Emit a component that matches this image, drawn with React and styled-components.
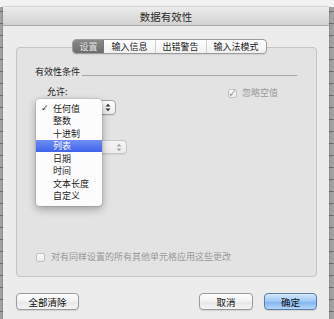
import React from 'react'
import styled, { createGlobalStyle } from 'styled-components'

const GlobalStyle = createGlobalStyle`
    html, body {
        margin: 0;
        padding: 0;
        background: #a4a4a4;
    }
    * {
        box-sizing: border-box;
    }
`

const menuItems = ['任何值', '整数', '十进制', '列表', '日期', '时间', '文本长度', '自定义']

function UpDown({ faded }) {
    const c = faded ? '#a8a8a8' : '#333'
    return (
        <svg width="6" height="9" viewBox="0 0 6 9">
            <path d="M0.5 3.5 L3 0.8 L5.5 3.5 Z" fill={c} />
            <path d="M0.5 5.5 L3 8.2 L5.5 5.5 Z" fill={c} />
        </svg>
    )
}

function App() {
    return (
        <>
            <GlobalStyle />
            <Screen>
                <Window>
                    <TitleBar>数据有效性</TitleBar>
                    <Body>
                        <Tabs>
                            <Tab active>设置</Tab>
                            <Tab>输入信息</Tab>
                            <Tab>出错警告</Tab>
                            <Tab last>输入法模式</Tab>
                        </Tabs>
                        <Group>
                            <Heading>
                                <span>有效性条件</span>
                                <HeadingLine />
                            </Heading>
                            <Criteria>
                                <Fields>
                                    <Label>允许:</Label>
                                    <PopupWrap>
                                        <Popup width={69}>
                                            <UpDown />
                                        </Popup>
                                        <Menu>
                                            {menuItems.map((item, i) => (
                                                <MenuItem key={item} highlighted={i === 3}>
                                                    <Check>{i === 0 ? '✓' : ''}</Check>
                                                    {item}
                                                </MenuItem>
                                            ))}
                                        </Menu>
                                    </PopupWrap>
                                    {/* 数据 label sits under the open menu */}
                                    <HiddenLabel />
                                    <Popup width={80} faded>
                                        <UpDown faded />
                                    </Popup>
                                </Fields>
                                <CheckRow right>
                                    <CheckBox checked>✓</CheckBox>
                                    <CheckText>忽略空值</CheckText>
                                </CheckRow>
                            </Criteria>
                            <CheckRow bottom>
                                <CheckBox />
                                <CheckText>对有同样设置的所有其他单元格应用这些更改</CheckText>
                            </CheckRow>
                        </Group>
                        <Footer>
                            <Button width={63}>全部清除</Button>
                            <Spacer />
                            <Button width={54}>取消</Button>
                            <Button width={53} primary>确定</Button>
                        </Footer>
                    </Body>
                </Window>
            </Screen>
        </>
    )
}

export default App

const Screen = styled.div`
    position: relative;
    width: 334px;
    height: 319px;
    display: flex;
    padding: 7px 5px 0 3px;
    overflow: hidden;
    background:
        linear-gradient(#f2f2f2, #f2f2f2) top / 100% 7px no-repeat,
        repeating-linear-gradient(180deg, #a2a2a2 0px, #a2a2a2 11px, #6e6e6e 11px, #6e6e6e 12px);
`

const Window = styled.div`
    flex: 1;
    display: flex;
    flex-direction: column;
    background: #ececec;
    box-shadow: 0 0 2px rgba(0, 0, 0, 0.35);
    font-family: "Noto Sans CJK SC", "Noto Sans", sans-serif;
    color: #1e1e1e;
`

const TitleBar = styled.div`
    height: 19px;
    display: flex;
    align-items: center;
    justify-content: center;
    font-size: 10.5px;
    color: #2c2c2c;
    background: linear-gradient(#ebebeb, #d2d2d2);
    border-bottom: 1px solid #a9a9a9;
    border-radius: 3px 3px 0 0;
`

const Body = styled.div`
    flex: 1;
    display: flex;
    flex-direction: column;
    padding: 13px 12px 8px 13px;
`

const Tabs = styled.div`
    position: relative;
    z-index: 1;
    align-self: center;
    display: flex;
    height: 15px;
    margin-bottom: -7px;
    margin-left: 6px;
    border: 1px solid #9c9c9c;
    border-radius: 4px;
    background: linear-gradient(#ffffff, #f0f0f0);
    overflow: hidden;
    box-shadow: 0 1px 1px rgba(0, 0, 0, 0.08);
`

const Tab = styled.div`
    display: flex;
    align-items: center;
    padding: 0 ${props => (props.active ? 6 : 7)}px;
    font-size: 9px;
    line-height: 1;
    color: ${props => (props.active ? '#e2e2e2' : '#222')};
    background: ${props => (props.active ? 'linear-gradient(#8a8a8a, #6c6c6c)' : 'transparent')};
    border-right: ${props => (props.last ? 'none' : props.active ? '1px solid #777' : '1px solid #d0d0d0')};
`

const Group = styled.div`
    height: 230px;
    display: flex;
    flex-direction: column;
    padding: 0 19px 13px 18px;
    background: #e3e3e3;
    border: 1px solid #c4c4c4;
    border-radius: 4px;
`

const Heading = styled.div`
    display: flex;
    align-items: flex-end;
    margin-top: 18px;
    font-size: 9px;
    line-height: 12px;
    color: #1e1e1e;
`

const HeadingLine = styled.div`
    flex: 1;
    margin: 0 0 2px 2px;
    border-bottom: 1px solid #a6a6a6;
`

const Criteria = styled.div`
    display: flex;
    justify-content: space-between;
    align-items: flex-start;
    margin-top: 8px;
`

const Fields = styled.div`
    display: flex;
    flex-direction: column;
    align-items: flex-start;
    margin-left: 12px;
`

const Label = styled.div`
    font-size: 9px;
    line-height: 12px;
    color: #1e1e1e;
    margin: 0 0 2px;
`

const HiddenLabel = styled.div`
    height: 25px;
`

const PopupWrap = styled.div`
    position: relative;
`

const Popup = styled.div`
    width: ${props => props.width}px;
    height: ${props => (props.faded ? 14 : 15)}px;
    display: flex;
    align-items: center;
    justify-content: flex-end;
    padding-right: 4px;
    border: 1px solid ${props => (props.faded ? '#c6c6c6' : '#a3a3a3')};
    border-radius: 4px;
    background: ${props => (props.faded ? 'linear-gradient(#f4f4f4, #ececec)' : 'linear-gradient(#ffffff, #ececec)')};
    box-shadow: 0 1px 1px rgba(0, 0, 0, 0.08);
`

const Menu = styled.div`
    position: absolute;
    top: -1px;
    left: -11px;
    width: 66px;
    padding: 3px 0 4px;
    background: #fcfcfc;
    border-radius: 4px;
    box-shadow: 0 3px 9px rgba(0, 0, 0, 0.32), 0 0 0 1px rgba(0, 0, 0, 0.08);
`

const MenuItem = styled.div`
    display: flex;
    align-items: center;
    height: 12.5px;
    font-size: 9px;
    color: ${props => (props.highlighted ? '#ffffff' : '#1e1e1e')};
    background: ${props => (props.highlighted ? 'linear-gradient(#6f8ff4, #3f63ea)' : 'transparent')};
`

const Check = styled.span`
    width: 17px;
    padding-left: 5px;
    font-family: "DejaVu Sans", sans-serif;
    font-size: 9px;
    font-weight: bold;
`

const CheckRow = styled.div`
    display: flex;
    align-items: center;
    margin-top: ${props => (props.bottom ? 'auto' : '1px')};
    margin-right: ${props => (props.right ? 19 : 0)}px;
    margin-left: ${props => (props.bottom ? 1 : 0)}px;
`

const CheckBox = styled.div`
    width: 9px;
    height: 9px;
    display: flex;
    align-items: center;
    justify-content: center;
    margin-right: ${props => (props.checked ? 5 : 6)}px;
    border: 1px solid #c2c2c2;
    border-radius: 2px;
    background: linear-gradient(#fafafa, #ececec);
    font-family: "DejaVu Sans", sans-serif;
    font-size: 11px;
    font-weight: bold;
    line-height: 1;
    color: #9d9d9d;
    overflow: visible;
`

const CheckText = styled.span`
    font-size: 9px;
    line-height: 12px;
    color: #999;
`

const Footer = styled.div`
    display: flex;
    align-items: center;
    gap: 11px;
    margin-top: 16px;
`

const Spacer = styled.div`
    flex: 1;
`

const Button = styled.div`
    width: ${props => props.width}px;
    height: 17px;
    display: flex;
    align-items: center;
    justify-content: center;
    font-size: 9.5px;
    color: #111;
    border: 1px solid ${props => (props.primary ? '#5b7ea9' : '#9b9b9b')};
    border-radius: 4px;
    background: ${props => (props.primary
        ? 'linear-gradient(#d6e8fb, #9cc6f3 50%, #7fb3ee 51%, #b3d6f8)'
        : 'linear-gradient(#ffffff, #f1f1f1 50%, #e6e6e6 51%, #f5f5f5)')};
    box-shadow: 0 1px 1px rgba(0, 0, 0, 0.12);
`
